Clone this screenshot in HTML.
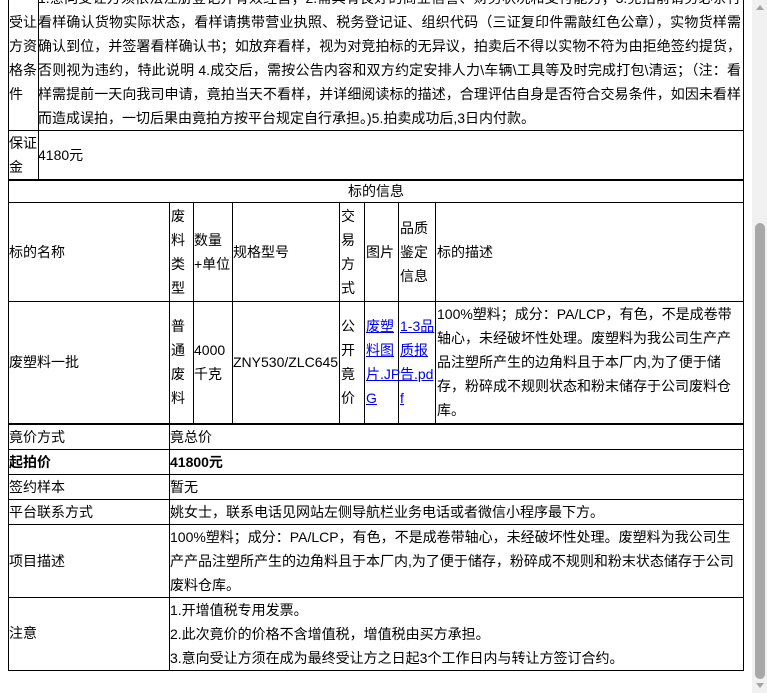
<!DOCTYPE html>
<html><head><meta charset="utf-8"><style>
*{margin:0;padding:0;box-sizing:border-box}
body{width:767px;height:693px;overflow:hidden;background:#fff;position:relative;font-family:"Liberation Sans","Noto Sans CJK SC",sans-serif;font-size:14px;color:#000}
.h{position:absolute;height:1px;background:#000}
.v{position:absolute;width:1px;background:#000}
.t{position:absolute;white-space:nowrap;line-height:24px}
.j{position:absolute;left:38px;width:703px;line-height:24px;text-align:justify;text-align-last:justify;white-space:nowrap;overflow:hidden}
a{color:#00e;text-decoration:underline}
</style></head><body>
<div class="j" style="top:-14px">1.意向受让方须依法注册登记并有效经营；2.需具有良好的商业信誉、财务状况和支付能力；3.竞拍前请务必亲行</div>
<div class="j" style="top:10px">看样确认货物实际状态，看样请携带营业执照、税务登记证、组织代码（三证复印件需敲红色公章），实物货样需</div>
<div class="j" style="top:34px">确认到位，并签署看样确认书；如放弃看样，视为对竞拍标的无异议，拍卖后不得以实物不符为由拒绝签约提货，</div>
<div class="j" style="top:58px">否则视为违约，特此说明 4.成交后，需按公告内容和双方约定安排人力\车辆\工具等及时完成打包\清运；（注：看</div>
<div class="j" style="top:82px">样需提前一天向我司申请，竟拍当天不看样，并详细阅读标的描述，合理评估自身是否符合交易条件，如因未看样</div>
<div class="t" style="left:38px;top:106px">而造成误拍，一切后果由竟拍方按平台规定自行承担。)5.拍卖成功后,3日内付款。</div>
<div class="t" style="left:9px;top:10px;line-height:24px;white-space:normal;width:30px">受让<br>方资<br>格条<br>件</div>
<div class="t" style="left:9px;top:131px;white-space:normal;width:30px">保证<br>金</div>
<div class="t" style="left:38px;top:143px">4180元</div>
<div class="v" style="left:8px;top:0;height:180px"></div>
<div class="v" style="left:38px;top:0;height:180px"></div>
<div class="v" style="left:743px;top:0;height:180px"></div>
<div class="h" style="left:8px;top:130px;width:736px"></div>
<div class="h" style="left:8px;top:179px;width:736px;height:2px"></div>
<div class="t" style="left:8px;width:736px;text-align:center;top:179px">标的信息</div>
<div class="h" style="left:8px;top:202px;width:736px"></div>
<div class="h" style="left:8px;top:301px;width:736px"></div>
<div class="h" style="left:8px;top:423px;width:736px;height:2px"></div>
<div class="v" style="left:8px;top:180px;height:245px"></div>
<div class="v" style="left:743px;top:180px;height:245px"></div>
<div class="v" style="left:169px;top:202px;height:222px"></div>
<div class="v" style="left:193px;top:202px;height:222px"></div>
<div class="v" style="left:232px;top:202px;height:222px"></div>
<div class="v" style="left:339px;top:202px;height:222px"></div>
<div class="v" style="left:364px;top:202px;height:222px"></div>
<div class="v" style="left:398px;top:202px;height:222px"></div>
<div class="v" style="left:435px;top:202px;height:222px"></div>
<div class="t" style="left:9px;top:240px">标的名称</div>
<div class="t" style="left:171px;top:204px;white-space:normal;width:16px">废料类型</div>
<div class="t" style="left:194px;top:228px">数量<br>+单位</div>
<div class="t" style="left:233px;top:240px">规格型号</div>
<div class="t" style="left:341px;top:204px;white-space:normal;width:16px">交易方式</div>
<div class="t" style="left:366px;top:240px">图片</div>
<div class="t" style="left:400px;top:216px">品质<br>鉴定<br>信息</div>
<div class="t" style="left:437px;top:240px">标的描述</div>
<div class="t" style="left:9px;top:350px">废塑料一批</div>
<div class="t" style="left:171px;top:314px;white-space:normal;width:16px">普通废料</div>
<div class="t" style="left:194px;top:338px">4000<br>千克</div>
<div class="t" style="left:233px;top:350px">ZNY530/ZLC645</div>
<div class="t" style="left:341px;top:314px;white-space:normal;width:16px">公开竟价</div>
<div class="t" style="left:366px;top:314px"><a>废塑<br>料图<br>片.JP<br>G</a></div>
<div class="t" style="left:400px;top:314px"><a>1-3品<br>质报<br>告.pd<br>f</a></div>
<div class="t" style="left:437px;top:302px;white-space:normal;width:305px;line-height:24px">100%塑料；成分：PA/LCP，有色，不是成卷带轴心，未经破坏性处理。废塑料为我公司生产产品注塑所产生的边角料且于本厂内,为了便于储存，粉碎成不规则状态和粉末储存于公司废料仓库。</div>
<div class="v" style="left:8px;top:424px;height:247px"></div>
<div class="v" style="left:169px;top:424px;height:247px"></div>
<div class="v" style="left:743px;top:424px;height:247px"></div>
<div class="h" style="left:8px;top:449px;width:736px"></div>
<div class="h" style="left:8px;top:474px;width:736px"></div>
<div class="h" style="left:8px;top:499px;width:736px"></div>
<div class="h" style="left:8px;top:524px;width:736px"></div>
<div class="h" style="left:8px;top:597px;width:736px"></div>
<div class="h" style="left:8px;top:670px;width:736px"></div>
<div class="t" style="left:9px;top:425px">竟价方式</div>
<div class="t" style="left:170px;top:425px">竟总价</div>
<div class="t" style="left:9px;top:450px;font-weight:bold">起拍价</div>
<div class="t" style="left:170px;top:450px;font-weight:bold">41800元</div>
<div class="t" style="left:9px;top:475px">签约样本</div>
<div class="t" style="left:170px;top:475px">暂无</div>
<div class="t" style="left:9px;top:500px">平台联系方式</div>
<div class="t" style="left:170px;top:500px">姚女士，联系电话见网站左侧导航栏业务电话或者微信小程序最下方。</div>
<div class="t" style="left:9px;top:549px">项目描述</div>
<div class="t" style="left:170px;top:525px;white-space:normal;width:572px">100%塑料；成分：PA/LCP，有色，不是成卷带轴心，未经破坏性处理。废塑料为我公司生产产品注塑所产生的边角料且于本厂内,为了便于储存，粉碎成不规则和粉末状态储存于公司废料仓库。</div>
<div class="t" style="left:9px;top:621px">注意</div>
<div class="t" style="left:170px;top:598px;line-height:24px">1.开增值税专用发票。<br>2.此次竟价的价格不含增值税，增值税由买方承担。<br>3.意向受让方须在成为最终受让方之日起3个工作日内与转让方签订合约。</div>
<div style="position:absolute;left:752px;top:0;width:15px;height:693px;background:#f1f1f1"></div>
<div style="position:absolute;left:756px;top:5px;width:0;height:0;border-left:4px solid transparent;border-right:4px solid transparent;border-bottom:5px solid #a3a3a3"></div>
<div style="position:absolute;left:755px;top:223px;width:10px;height:456px;background:#a8a8a8;border-radius:5px"></div>
<div style="position:absolute;left:756px;top:683px;width:0;height:0;border-left:4px solid transparent;border-right:4px solid transparent;border-top:5px solid #a3a3a3"></div>
</body></html>
